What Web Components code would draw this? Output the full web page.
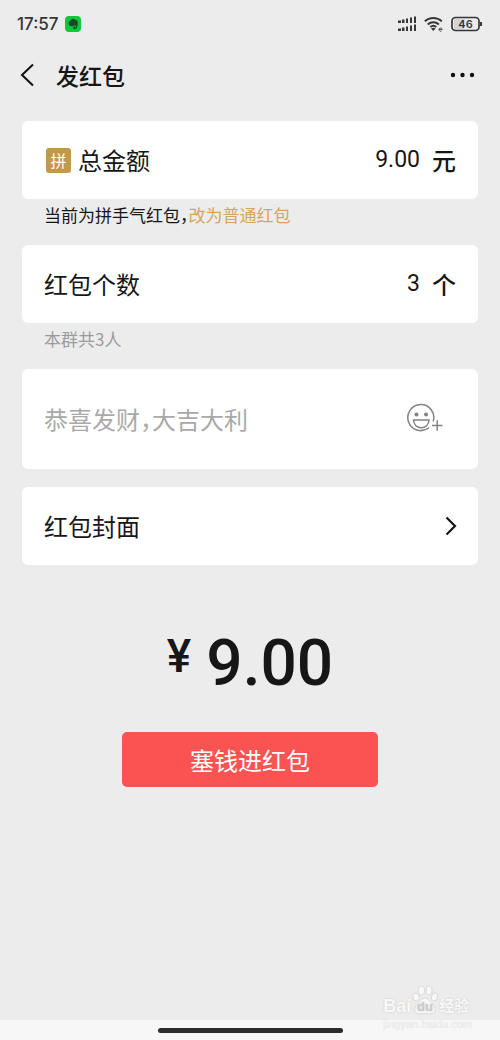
<!DOCTYPE html>
<html lang="zh-CN">
<head>
<meta charset="utf-8">
<meta name="viewport" content="width=device-width, initial-scale=1">
<title>发红包</title>
<style>
body {
  margin: 0;
  background: #ECECEC;
  color: #161616;
  font-family: 'Noto Sans CJK SC', sans-serif;
  font-feature-settings: 'halt';
}
</style>
</head>
<body>
<packet-page></packet-page>

<script>
function define(name, html, setup) {
  const tpl = document.createElement('template');
  tpl.innerHTML = html;
  customElements.define(name, class extends HTMLElement {
    constructor() {
      super();
      this.attachShadow({ mode: 'open' });
      this.shadowRoot.appendChild(tpl.content.cloneNode(true));
    }
    connectedCallback() {
      if (setup) setup(this, this.shadowRoot);
    }
  });
}

// phone status bar: clock, app notification, signal, wifi, battery
define('status-bar', `
<style>
:host {
  display: flex;
  align-items: center;
  height: 47px;
  padding: 0 18px 0 17px;
  color: #363636;
}
time { font: 500 17px/20px Inter, sans-serif; }
svg { display: block; }
.app { margin-left: 6px; }
.icons { display: flex; align-items: center; gap: 7px; margin-left: auto; }
</style>
<time>17:57</time>
<svg class="app" width="16" height="16" viewBox="0 0 16 16" aria-hidden="true">
  <rect width="16" height="16" rx="4" fill="#12C63A"/>
  <path d="M3.400 6.300L6.200 3.400C8 2.300 9.500 2.800 10 3.700c1.800.1 2.700.8 2.700 3 0 3.400-.5 6.500-2.900 6.500-1.800 0-2.200-2.100-1-2.800.9-.4 1.600 0 1.500.7-.8-.1-1 .9-.2.9.8 0 1.100-1.300 1-2.700-.7.600-1.700.5-2.200 0-.4 1-1.100 1.200-2.200 1C4.600 10 3.500 9 3.400 6.300z" fill="#144A26"/>
</svg>
<div class="icons">
  <svg width="20" height="16" viewBox="0 0 20 16" fill="#363636" aria-hidden="true">
    <path d="M1 4.500h3V7H1zM5 3.500h2.500V7H5zM9 2.500h2V7H9zM13 1.500h2V7h-2zM17 .5h2V7h-2z"/>
    <path d="M1 12.500h3V15H1zM5 11.500h2.500V15H5zM9 10.500h2V15H9zM13 9.500h2V15h-2zM17 8.500h2V15h-2z"/>
  </svg>
  <svg width="20" height="16" viewBox="0 0 20 16" aria-hidden="true">
    <g fill="none" stroke="#363636" stroke-width="2">
      <path d="M.8 5.400a12.300 12.300 0 0 1 17 0"/>
      <path d="M3.700 8.400a8.200 8.200 0 0 1 11.200 0"/>
      <path d="M6.300 11.100a4.600 4.600 0 0 1 6 0"/>
    </g>
    <path d="M7 12.600q2.300-1.600 4.600 0l-2.300 2.400z" fill="#363636"/>
    <path d="M15 13.500h3.200a1.600 1.600 0 1 0-.7 1.500" fill="none" stroke="#555" stroke-width="1"/>
  </svg>
  <svg width="31" height="16" viewBox="0 0 31 16" role="img" aria-label="46%">
    <rect x="3" y="3" width="10" height="10" fill="#D4D4D4"/>
    <rect x="1" y="1.500" width="27" height="13" rx="3.500" fill="none" stroke="#363636" stroke-width="1.700"/>
    <path d="M30 6v4" stroke="#363636" stroke-width="2"/>
    <text x="14.500" y="12" text-anchor="middle" font-family="Inter, sans-serif" font-size="11" font-weight="600" fill="#363636">46</text>
  </svg>
</div>
`);

define('nav-bar', `
<style>
:host { display: flex; align-items: center; height: 56px; padding: 0 24px 0 18px; }
h1 { margin: 0 auto 0 18px; font-size: 23px; line-height: 32px; font-weight: 500; }
a, button { display: block; padding: 0; border: 0; background: none; color: #111; cursor: pointer; }
svg { display: block; }
</style>
<a href="#back" aria-label="返回">
  <svg width="20" height="26" viewBox="0 0 20 26">
    <path d="M15 2.500L4 13l11 10.500" fill="none" stroke="currentColor" stroke-width="2"/>
  </svg>
</a>
<h1><slot></slot></h1>
<button type="button" aria-label="更多">
  <svg width="28" height="24" viewBox="0 0 28 24" fill="currentColor">
    <circle cx="5" cy="12" r="2.200"/><circle cx="14.500" cy="12" r="2.200"/><circle cx="24" cy="12" r="2.200"/>
  </svg>
</button>
`);

// labelled number row: <packet-field label value unit badge>
define('packet-field', `
<style>
:host {
  display: flex;
  align-items: center;
  min-height: 78px;
  padding: 0 22px;
  border-radius: 6px;
  background: #FFF;
  box-sizing: border-box;
  font-size: 24px;
  line-height: 32px;
}
.badge {
  width: 25px;
  margin: 0 7px 0 2px;
  border-radius: 3px;
  background: #C4984A;
  color: #FFF;
  font-size: 16px;
  line-height: 25px;
  text-align: center;
}
.badge[hidden] { display: none; }
label { flex: none; }
input {
  flex: 1;
  min-width: 0;
  padding: 0;
  border: 0;
  outline: 0;
  background: none;
  color: inherit;
  font: 400 23px/32px Roboto, sans-serif;
  text-align: right;
}
.unit { margin-left: 12px; font-weight: 500; }
</style>
<span class="badge" hidden></span>
<label for="value"></label>
<input id="value" type="text" inputmode="decimal">
<span class="unit"></span>
`, (el, root) => {
  const badge = root.querySelector('.badge');
  badge.textContent = el.getAttribute('badge') || '';
  badge.hidden = !el.hasAttribute('badge');
  root.querySelector('label').textContent = el.getAttribute('label');
  root.querySelector('.unit').textContent = el.getAttribute('unit');
  const input = root.querySelector('input');
  input.value = el.getAttribute('value');
  input.addEventListener('input', () => {
    el.dispatchEvent(new CustomEvent('field-change', { bubbles: true, detail: input.value }));
  });
});

define('field-hint', `
<style>
:host {
  display: block;
  padding: 4px 22px 18px;
  color: #161616;
  font-size: 17px;
  line-height: 24px;
}
:host([muted]) { color: #9B9B9B; }
::slotted(a) { color: #D3A65C; text-decoration: none; }
</style>
<slot></slot>
`);

define('greeting-field', `
<style>
:host {
  display: flex;
  align-items: center;
  min-height: 100px;
  padding: 0 34px 0 22px;
  border-radius: 6px;
  background: #FFF;
  box-sizing: border-box;
}
input {
  flex: 1;
  min-width: 0;
  padding: 0;
  border: 0;
  outline: 0;
  background: none;
  color: inherit;
  font: inherit;
  font-size: 24px;
  line-height: 32px;
  font-feature-settings: inherit;
}
input::placeholder { color: #A9A9A9; opacity: 1; }
button { padding: 0; border: 0; background: none; cursor: pointer; }
svg { display: block; }
</style>
<input type="text" placeholder="恭喜发财，大吉大利" aria-label="祝福语">
<button type="button" aria-label="添加表情">
  <svg width="38" height="32" viewBox="0 0 38 32" fill="none" stroke="#828282" stroke-width="1.500">
    <path d="M27.200 18.500a13 13 0 1 0-4 6"/>
    <path d="M7.500 17h15.500c-.4 4.700-3.500 7.700-7.700 7.700S7.900 21.700 7.500 17z"/>
    <circle cx="10.500" cy="11.500" r="2" fill="#828282" stroke="none"/>
    <circle cx="20" cy="11.500" r="2" fill="#828282" stroke="none"/>
    <path d="M26 22.500h10.500M31.200 17.200v10.500"/>
  </svg>
</button>
`);

define('cover-link', `
<style>
:host { display: block; }
a {
  display: flex;
  align-items: center;
  justify-content: space-between;
  min-height: 78px;
  padding: 0 20px 0 22px;
  border-radius: 6px;
  background: #FFF;
  color: inherit;
  font-size: 24px;
  line-height: 32px;
  text-decoration: none;
}
</style>
<a href="#cover">
  <slot></slot>
  <svg width="14" height="20" viewBox="0 0 14 20" aria-hidden="true">
    <path d="M2.500 1.500l8.500 8.500-8.500 8.500" fill="none" stroke="#161616" stroke-width="2.200"/>
  </svg>
</a>
`);

define('total-amount', `
<style>
:host {
  display: flex;
  justify-content: center;
  gap: 15px;
  font: 500 64px/84px Roboto, sans-serif;
}
.sign { font-size: 46px; line-height: 68px; }
</style>
<span class="sign">¥</span><slot></slot>
`);

define('pay-button', `
<style>
:host { display: block; width: 56%; margin: 0 auto; }
button {
  width: 100%;
  padding: 12px 0;
  border: 0;
  border-radius: 5px;
  background: #FB5352;
  color: #FFF;
  font: inherit;
  font-size: 24px;
  line-height: 31px;
  cursor: pointer;
}
</style>
<button type="button"><slot></slot></button>
`);

define('site-mark', `
<style>
:host {
  display: block;
  color: #F8F8F8;
  font-family: 'Liberation Sans', 'Noto Sans CJK SC', sans-serif;
  text-shadow: 0 0 2px #C8C8C8;
}
.logo { display: flex; align-items: center; font-weight: 700; font-size: 18px; line-height: 24px; }
.cn { font-size: 15px; }
svg { display: block; margin-top: -12px; }
.site { font-size: 11px; line-height: 12px; color: #F0F0F0; text-shadow: 0 0 1px #DADADA; }
</style>
<div class="logo">
  <span>Bai</span>
  <svg width="28" height="30" viewBox="0 0 28 30" aria-hidden="true">
    <g fill="#F8F8F8" stroke="#DADADA" stroke-width="1">
      <ellipse cx="5" cy="12" rx="3" ry="4" transform="rotate(-15 5 12)"/>
      <ellipse cx="10.500" cy="5.500" rx="3" ry="4.500"/>
      <ellipse cx="18" cy="5.500" rx="3" ry="4.500"/>
      <ellipse cx="23.500" cy="12" rx="3" ry="4" transform="rotate(15 23.500 12)"/>
      <path d="M14 13c3.500 0 5 4 8 6.500s3.500 9-2 9.500c-2 .2-4-.5-6-.5s-4 .7-6 .5c-5.500-.5-5-7-2-9.500s4.500-6.500 8-6.500z"/>
    </g>
    <text x="14" y="26" text-anchor="middle" font-size="13" fill="#CCCCCC">du</text>
  </svg>
  <span class="cn">经验</span>
</div>
<div class="site">jingyan.baidu.com</div>
`);

define('packet-page', `
<style>
:host { display: flex; flex-direction: column; min-height: 100vh; position: relative; }
main { flex: 1; padding: 18px 22px 24px; }
greeting-field { margin-bottom: 18px; }
total-amount { margin: 57px 0 26px; }
footer { display: flex; align-items: center; justify-content: center; height: 20px; background: #F7F7F7; }
.home { width: 37%; height: 5px; border-radius: 3px; background: #2D2D2D; }
site-mark { position: absolute; right: 28px; bottom: 10px; pointer-events: none; }
</style>
<status-bar></status-bar>
<nav-bar>发红包</nav-bar>
<main>
  <packet-field id="total" badge="拼" label="总金额" value="9.00" unit="元"></packet-field>
  <field-hint>当前为拼手气红包，<a href="#normal">改为普通红包</a></field-hint>
  <packet-field label="红包个数" value="3" unit="个"></packet-field>
  <field-hint muted>本群共3人</field-hint>
  <greeting-field></greeting-field>
  <cover-link>红包封面</cover-link>
  <total-amount>9.00</total-amount>
  <pay-button>塞钱进红包</pay-button>
</main>
<footer><div class="home"></div></footer>
<site-mark></site-mark>
`, (el, root) => {
  root.getElementById('total').addEventListener('field-change', (e) => {
    root.querySelector('total-amount').textContent = (parseFloat(e.detail) || 0).toFixed(2);
  });
});
</script>
</body>
</html>
